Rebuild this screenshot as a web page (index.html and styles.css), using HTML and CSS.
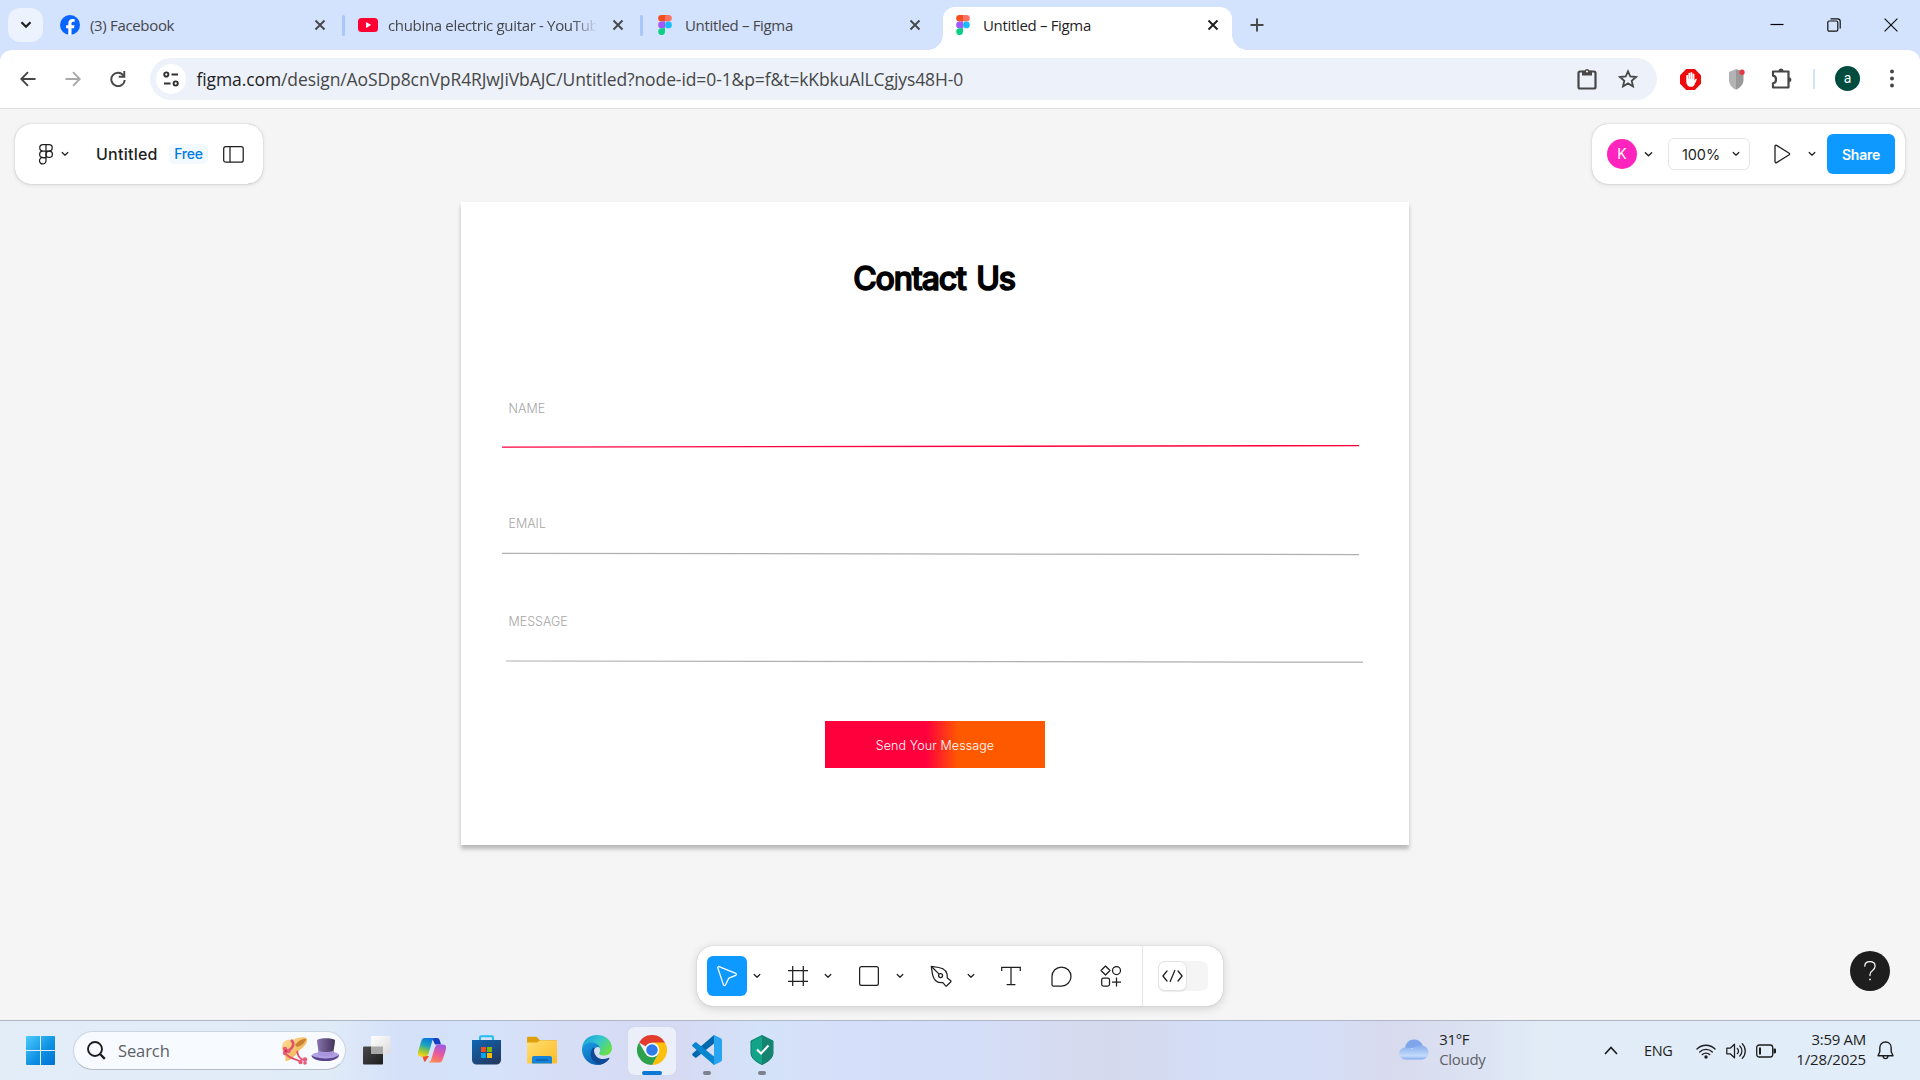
FILE: index.html
```html
<!DOCTYPE html>
<html lang="en">
<head>
<meta charset="utf-8">
<title>Untitled – Figma</title>
<link rel="stylesheet" href="styles.css">
</head>
<body>
<svg class="defs" width="0" height="0" aria-hidden="true">
  <symbol id="close" viewBox="0 0 12 12"><path d="M1.500 1.500l9 9M10.500 1.500l-9 9" fill="none" stroke="currentColor" stroke-width="1.900"/></symbol>
  <symbol id="chev" viewBox="0 0 8 6"><path d="M1.200 1.500l2.800 2.700 2.800-2.700" fill="none" stroke="currentColor" stroke-width="1.250" stroke-linecap="round" stroke-linejoin="round"/></symbol>
  <symbol id="figma" viewBox="0 0 14 20">
    <path d="M3.500 0H7v6.600H3.500a3.300 3.300 0 0 1 0-6.600z" fill="#f24e1e"/><path d="M7 0h3.500a3.300 3.300 0 0 1 0 6.600H7z" fill="#ff7262"/>
    <path d="M3.500 6.600H7v6.700H3.500a3.300 3.300 0 0 1 0-6.700z" fill="#a259ff"/><circle cx="10.400" cy="9.950" r="3.400" fill="#1abcfe"/>
    <path d="M3.500 13.300H7v3.300a3.400 3.400 0 1 1-3.500-3.300z" fill="#0acf83"/>
  </symbol>
</svg>

<header class="tabstrip">
  <button class="tab-search"><svg width="12" height="8" viewBox="0 0 12 8"><path d="M1.500 1.200L6 5.800l4.500-4.600" fill="none" stroke="#1f1f1f" stroke-width="2.200"/></svg></button>
  <div class="tabs">
    <div class="tab">
      <svg class="fav" viewBox="0 0 20 20"><circle cx="10" cy="10" r="10" fill="#0866ff"/><path d="M8.300 20v-6.800H6.100v-3h2.200V8.700c0-3.200 1.500-4.700 4.400-4.700.6 0 1.500.1 1.900.2v2.700c-.2 0-.6-.1-1.100-.1-1.500 0-2 .6-2 2v1.400h3l-.5 3h-2.500V20z" fill="#fff"/></svg>
      <span class="tab-title">(3) Facebook</span>
      <svg class="x"><use href="#close"/></svg>
    </div>
    <div class="tab">
      <svg class="fav" viewBox="0 0 20 20"><rect y="3" width="20" height="14" rx="3.500" fill="#ff0033"/><path d="M8 7l5.200 3L8 13z" fill="#fff"/></svg>
      <span class="tab-title long">chubina electric guitar - YouTube</span>
      <svg class="x"><use href="#close"/></svg>
    </div>
    <div class="tab">
      <svg class="fav"><use href="#figma"/></svg>
      <span class="tab-title">Untitled – Figma</span>
      <svg class="x"><use href="#close"/></svg>
    </div>
    <div class="tab active">
      <svg class="fav"><use href="#figma"/></svg>
      <span class="tab-title">Untitled – Figma</span>
      <svg class="x"><use href="#close"/></svg>
    </div>
  </div>
  <svg class="new-tab" width="14" height="14" viewBox="0 0 14 14"><path d="M7 .5v13M.5 7h13" stroke="#474747" stroke-width="1.900"/></svg>
  <div class="window-controls">
    <svg width="14" height="14" viewBox="0 0 14 14"><path d="M.5 6.500h13" stroke="#000" stroke-width="1.200"/></svg>
    <svg width="14" height="14" viewBox="0 0 14 14"><g fill="none" stroke="#111" stroke-width="1.200"><rect x=".8" y="3" width="10" height="10.200" rx="1.500"/><path d="M3.500 .8h7a2.700 2.700 0 0 1 2.700 2.700v7"/></g></svg>
    <svg width="14" height="14" viewBox="0 0 14 14"><path d="M.6.6l12.800 12.800M13.400.6L.6 13.400" stroke="#111" stroke-width="1.200"/></svg>
  </div>
</header>

<nav class="browser-bar">
  <div class="nav-buttons">
    <svg width="16" height="16" viewBox="0 0 16 16"><path d="M15.500 8H1.500M8 1.200L1.300 8 8 14.800" fill="none" stroke="#474747" stroke-width="1.900"/></svg>
    <svg width="16" height="16" viewBox="0 0 16 16"><path d="M.5 8h14M8 1.200L14.700 8 8 14.800" fill="none" stroke="#a9a9a9" stroke-width="1.900"/></svg>
    <svg width="16" height="16" viewBox="0 0 16 16"><path d="M13.600 4.700A6.700 6.700 0 1 0 14.700 9" fill="none" stroke="#474747" stroke-width="1.900"/><path d="M14.300 0v5.800H8.700" fill="none" stroke="#474747" stroke-width="1.900"/></svg>
  </div>
  <div class="omnibox">
    <span class="site-info"><svg width="16" height="16" viewBox="0 0 16 16"><g fill="none" stroke="#303030" stroke-width="1.900"><circle cx="3.300" cy="3.500" r="2.100"/><path d="M8.500 3.500H15M1 12.500h6.500"/><circle cx="12.700" cy="12.500" r="2.100"/></g></svg></span>
    <span class="url"><b>figma.com</b>/design/AoSDp8cnVpR4RJwJiVbAJC/Untitled?node-id=0-1&amp;p=f&amp;t=kKbkuAlLCgjys48H-0</span>
    <svg class="clip" width="20" height="22" viewBox="0 0 20 22"><rect x="1.500" y="3.500" width="17" height="17" rx="1.500" fill="none" stroke="#474747" stroke-width="2.200"/><path d="M5 2.800h2.600a2.500 2.500 0 0 1 4.800 0H15v4.700H5z" fill="#474747"/><circle cx="10" cy="3.400" r="1" fill="#fff"/></svg>
    <svg class="star" width="20" height="20" viewBox="0 0 20 20"><path d="M10 2.300l2.300 5.200 5.700.5-4.300 3.800 1.300 5.600-5-3-5 3 1.300-5.600L2 8l5.700-.5z" fill="none" stroke="#474747" stroke-width="1.800"/></svg>
  </div>
  <div class="extensions">
    <svg width="21" height="21" viewBox="0 0 21 21"><path d="M6.200 0h8.600L21 6.200v8.600L14.800 21H6.200L0 14.800V6.200z" fill="#ed0b0b"/><path d="M6.300 12V6.800a.9.900 0 0 1 1.800 0V10h.3V4.600a.9.900 0 0 1 1.800 0V10h.3V3.900a.9.900 0 0 1 1.800 0V10h.3V5.300a.9.900 0 0 1 1.800 0v6.500l.8-1.500c.7-.9 1.800-.3 1.500.5l-2.400 5.100c-.6 1.200-1.700 1.900-3.200 1.900-3 0-4.800-2-4.800-5.800z" fill="#fff"/></svg>
    <svg width="21" height="21" viewBox="0 0 21 21"><path d="M10 0L3 3v8c0 4.700 3.500 8 7 9.800z" fill="#b3b3b3"/><path d="M10 0l7.500 3v8c0 4.700-4 8-7.500 9.800z" fill="#999"/><circle cx="16" cy="3.200" r="2.700" fill="#e63946"/></svg>
    <svg width="22" height="22" viewBox="0 0 22 22"><path d="M2 3.500h15.500v16H2v-4.200c4-.5 4-7 0-7.600z" fill="none" stroke="#474747" stroke-width="2.200" stroke-linejoin="round"/><path d="M7.500 3a2.500 2.500 0 0 1 5 0M18 9.200a2.500 2.500 0 0 1 0 5z" fill="#474747"/></svg>
    <i class="ext-sep"></i>
    <span class="profile">a</span>
    <svg class="kebab" width="4" height="20" viewBox="0 0 4 20"><g fill="#474747"><circle cx="2" cy="2.500" r="2"/><circle cx="2" cy="9.500" r="2"/><circle cx="2" cy="16.500" r="2"/></g></svg>
  </div>
</nav>

<main class="workspace">
  <section class="panel file-panel">
    <svg class="fig-logo" width="14" height="21" viewBox="0 0 14 21"><g fill="none" stroke="#1f1f1f" stroke-width="1.250"><path d="M7 .7H3.900a3.150 3.150 0 0 0 0 6.300H7zM7 .7h3.100a3.150 3.150 0 0 1 0 6.300H7zM7 7H3.900a3.250 3.250 0 0 0 0 6.500H7z"/><circle cx="10.200" cy="10.250" r="3.200"/><path d="M7 13.500H3.900A3.250 3.250 0 1 0 7 16.800z"/></g></svg>
    <svg class="chev"><use href="#chev"/></svg>
    <span class="file-name">Untitled</span>
    <span class="plan">Free</span>
    <svg class="sidebar-icon" width="21" height="17" viewBox="0 0 21 17"><g fill="none" stroke="#1f1f1f" stroke-width="1.250"><rect x=".7" y=".7" width="19.500" height="15.500" rx="2"/><path d="M7 .7v15.500"/></g></svg>
  </section>

  <section class="panel share-panel">
    <span class="user">K</span>
    <svg class="chev big"><use href="#chev"/></svg>
    <span class="zoom">100%<svg class="chev"><use href="#chev"/></svg></span>
    <svg class="play" width="17" height="20" viewBox="0 0 17 20"><path d="M1 2.200v15.600c0 .8.900 1.300 1.600.8l12.600-7.800c.6-.4.600-1.200 0-1.600L2.600 1.400C1.900.9 1 1.400 1 2.200z" fill="none" stroke="#1f1f1f" stroke-width="1.300"/></svg>
    <svg class="chev play-chev"><use href="#chev"/></svg>
    <button class="share">Share</button>
  </section>

  <article class="frame">
    <h1>Contact Us</h1>
    <div class="field name"><label>NAME</label><svg class="rule" viewBox="0 0 857 6"><path d="M0 4.200L857 2.600" stroke="#ff003d" stroke-width="1.300"/></svg></div>
    <div class="field email"><label>EMAIL</label><svg class="rule" viewBox="0 0 857 6"><path d="M0 2.300L857 3.600" stroke="#b0b0b0" stroke-width="1.200"/></svg></div>
    <div class="field message"><label>MESSAGE</label><svg class="rule" viewBox="0 0 857 6"><path d="M0 2L857 3.200" stroke="#b0b0b0" stroke-width="1.200"/></svg></div>
    <button class="send">Send Your Message</button>
  </article>

  <section class="panel tools">
    <span class="tool selected"><svg width="24" height="24" viewBox="0 0 24 24"><path d="M2.800 3.900l5.700 17c.3.900 1.500.9 1.900.1l3.100-6.300c.2-.4.5-.7.900-.9l6.300-2.500c.9-.4.9-1.600 0-1.900L4.100 2.600c-.8-.3-1.600.5-1.300 1.300z" fill="none" stroke="#fff" stroke-width="1.300"/></svg></span>
    <svg class="chev"><use href="#chev"/></svg>
    <span class="tool"><svg width="20" height="20" viewBox="0 0 20 20"><path d="M4.700 0v20M15.300 0v20M0 4.700h20M0 15.300h20" stroke="#1f1f1f" stroke-width="1.250"/></svg></span>
    <svg class="chev"><use href="#chev"/></svg>
    <span class="tool"><svg width="20" height="20" viewBox="0 0 20 20"><rect x=".6" y=".6" width="18.800" height="18.800" rx="2" fill="none" stroke="#1f1f1f" stroke-width="1.250"/></svg></span>
    <svg class="chev shape-chev"><use href="#chev"/></svg>
    <span class="tool"><svg width="22" height="22" viewBox="0 0 22 22"><g fill="none" stroke="#1f1f1f" stroke-width="1.250" stroke-linejoin="round"><path d="M1.300 1.300l7.500 1.200c6.500 1.100 8.900 5.200 8.500 10.500l3.200 2.500c.6.500.6 1 .1 1.500l-3.800 3.700c-.5.500-1 .4-1.400-.1l-2.500-2.900c-5.500.4-9.200-2.200-10.400-8.400z"/><path d="M1.500 1.500l7.600 7.600"/><circle cx="10.600" cy="10.600" r="2"/></g></svg></span>
    <svg class="chev pen-chev"><use href="#chev"/></svg>
    <span class="tool text-tool"><svg width="20" height="20" viewBox="0 0 20 20"><path d="M.7 5V1.300h18.600V5M10 1.300v17.400M5.600 18.700h8.800" fill="none" stroke="#1f1f1f" stroke-width="1.250"/></svg></span>
    <span class="tool"><svg width="21" height="21" viewBox="0 0 21 21"><path d="M10.500 1a9.500 9.500 0 1 1 0 19H2.200c-.7 0-1.200-.5-1.200-1.200v-8.300A9.500 9.500 0 0 1 10.500 1z" fill="none" stroke="#1f1f1f" stroke-width="1.250"/></svg></span>
    <span class="tool"><svg width="22" height="22" viewBox="0 0 22 22"><g fill="none" stroke="#1f1f1f" stroke-width="1.250" stroke-linejoin="round"><path d="M5.500 1L10 5.500 5.500 10 1 5.500z"/><circle cx="16.500" cy="5.500" r="4"/><rect x="1.700" y="13" width="7.800" height="8" rx="1.800"/><path d="M16.500 12.500v9M12 17h9"/></g></svg></span>
    <span class="mode"><span class="toggle"><span class="knob"><svg width="21" height="14" viewBox="0 0 21 14"><path d="M5 2L.9 7 5 12M16 2l4.100 5L16 12M12.800 1.500L8.200 12.500" fill="none" stroke="#1f1f1f" stroke-width="1.250" stroke-linecap="round" stroke-linejoin="round"/></svg></span></span></span>
  </section>

  <button class="help"><svg width="14" height="22" viewBox="0 0 14 22"><path d="M1.800 6.200C1.800 3.400 4 1.700 6.900 1.700s5.200 1.700 5.200 4.500c0 2.300-1.300 3.400-2.800 4.500C7.900 11.700 7 12.500 7 14.600v1" fill="none" stroke="#fff" stroke-width="1.200" stroke-linecap="round"/><circle cx="7" cy="19.400" r=".9" fill="#fff"/></svg></button>
</main>

<footer class="taskbar">
  <svg class="start" width="29" height="29" viewBox="0 0 29 29"><defs><linearGradient id="win" gradientUnits="userSpaceOnUse" x1="0" y1="0" x2="29" y2="29"><stop offset="0" stop-color="#4ccbfb"/><stop offset=".55" stop-color="#0f92e4"/><stop offset="1" stop-color="#0070d0"/></linearGradient></defs><path d="M1 0h13v14H0V1a1 1 0 0 1 1-1zM15 0h13a1 1 0 0 1 1 1v13H15zM0 15h14v14H1a1 1 0 0 1-1-1zM15 15h14v13a1 1 0 0 1-1 1H15z" fill="url(#win)"/></svg>
  <div class="search">
    <svg width="19" height="19" viewBox="0 0 19 19"><circle cx="8" cy="8" r="7" fill="none" stroke="#1d1d1d" stroke-width="1.900"/><path d="M13 13l4.800 4.800" stroke="#1d1d1d" stroke-width="2.400"/></svg>
    <span>Search</span>
    <svg class="hats" width="60" height="28" viewBox="0 0 60 28">
      <defs><linearGradient id="straw" x1="0" y1="0" x2="1" y2="1"><stop offset="0" stop-color="#ffe09a"/><stop offset="1" stop-color="#eca63f"/></linearGradient><linearGradient id="felt" x1="0" y1="0" x2="1" y2="0"><stop offset="0" stop-color="#8874ae"/><stop offset="1" stop-color="#423359"/></linearGradient></defs>
      <path d="M1 12C0 5 6 1 11 3c5-3 14-4 15-1 1 5-5 9-9 13-4 5-8 9-13 9 2-4-2-8-3-12z" fill="url(#straw)"/>
      <path d="M14 8c4-5 9-7 11-6-1 4-5 7-9 8z" fill="#c98232"/>
      <path d="M10 3c4 3 3 8-5 12" fill="none" stroke="#e0506d" stroke-width="2.500"/>
      <path d="M5 17c5 6 10 4 15 8M16 14c1 5 2 7 6 9" fill="none" stroke="#e0506d" stroke-width="1.800"/>
      <g fill="#e8597a"><circle cx="4" cy="12" r="2.200"/><circle cx="7.500" cy="14" r="2.200"/><circle cx="4" cy="16" r="2.200"/><circle cx="19.500" cy="25" r="2.200"/><circle cx="24" cy="22.500" r="2.200"/><circle cx="24" cy="26" r="1.800"/></g><circle cx="5" cy="14" r="1.200" fill="#c9304f"/>
      <path d="M30.500 18.500c2-3 7-3.500 14-3.500s11 0 13.500 2.500c1 4-6 6.500-13.500 6.500s-14-2-14-5.500z" fill="#b2a1e2"/>
      <path d="M30.500 18.500c5 3 21 5 27.500-.5-1 4-7 6-13.500 6s-13-1.500-14-5.500z" fill="#58438a"/>
      <path d="M37.500 16c0-5-1.500-9-1.500-13 3-2.200 15-2.200 18 0 0 4-1.500 9-1.500 13-3 2-12 2-15 0z" fill="url(#felt)"/>
      <path d="M37.300 13.500c4 2 11 2 15.300 0V18c-4 2-11 2-15.300 0z" fill="#a996dc"/>
    </svg>
  </div>
  <div class="apps">
    <span class="app"><svg width="29" height="29" viewBox="0 0 29 29"><defs><linearGradient id="tv1" x1="0" y1="0" x2="1" y2="1"><stop offset="0" stop-color="#4b4b4b"/><stop offset="1" stop-color="#1d1d1d"/></linearGradient><linearGradient id="tv2" x1="0" y1="0" x2="1" y2="1"><stop offset="0" stop-color="#fff"/><stop offset="1" stop-color="#dcdcdc"/></linearGradient></defs><rect x="1" y="10.500" width="20" height="18" rx="1" fill="url(#tv1)"/><rect x="9" y="0" width="19.500" height="18" rx="1" fill="url(#tv2)"/><path d="M9 10.500h12V18H9z" fill="#a9a9a9"/></svg></span>
    <span class="app"><svg width="30" height="28" viewBox="0 0 30 28"><defs><linearGradient id="cp1" x1=".6" y1="0" x2=".3" y2="1"><stop offset="0" stop-color="#0d72dc"/><stop offset=".4" stop-color="#1ba5c0"/><stop offset=".7" stop-color="#8dc63f"/><stop offset="1" stop-color="#ffd314"/></linearGradient><linearGradient id="cp2" x1=".7" y1="0" x2=".3" y2="1"><stop offset="0" stop-color="#9c59e6"/><stop offset=".5" stop-color="#e85a9b"/><stop offset="1" stop-color="#ff8a4e"/></linearGradient></defs><path d="M15 2h5c1.500 0 2.500 1 3 3l1 3.500h-6z" fill="#173fc0"/><path d="M8 26c-1-.500-1.500-2-2-4l-.5-2H12z" fill="#ef5130"/><path d="M7.500 2H18c-2 .500-2.500 2-3.300 5l-2.900 10c-.8 2.500-2 3.500-4.500 3.500H4C.500 20.500.5 17.500 1.500 14L4 6c.8-2.700 1.500-4 3.500-4z" fill="url(#cp1)"/><path d="M22.500 26.500H11c2.500-.300 3-2 3.800-5l2.900-9.500c.8-2.500 2-3.500 4.500-3.500H26c3.500 0 3.500 3 2.500 6.500L26 22.500c-.8 2.700-1.500 4-3.500 4z" fill="url(#cp2)"/></svg></span>
    <span class="app"><svg width="29" height="30" viewBox="0 0 29 30"><defs><linearGradient id="st" x1="0" y1="0" x2=".7" y2="1"><stop offset="0" stop-color="#0f66b5"/><stop offset="1" stop-color="#233a62"/></linearGradient></defs><path d="M8 6V2.500C8 1.700 8.500 1.200 9.200 1.200h10.600c.7 0 1.200.5 1.200 1.300V6" fill="none" stroke="#22bdf2" stroke-width="2"/><path d="M0 5h29v20a4.500 4.500 0 0 1-4.500 4.500h-20A4.500 4.500 0 0 1 0 25z" fill="url(#st)"/><path d="M9 12h5v5H9z" fill="#f25022"/><path d="M15 12h5v5h-5z" fill="#7fba00"/><path d="M9 18h5v5H9z" fill="#00a4ef"/><path d="M15 18h5v5h-5z" fill="#ffb900"/></svg></span>
    <span class="app"><svg width="30" height="28" viewBox="0 0 30 28"><defs><linearGradient id="fo" x1="0" y1="0" x2="1" y2="1"><stop offset="0" stop-color="#ffdf72"/><stop offset="1" stop-color="#fdbb25"/></linearGradient></defs><path d="M0 2c0-.7.500-1.200 1.200-1.200h8.300L13 4.200h15.800c.700 0 1.200.500 1.200 1.200V10H0z" fill="#dfa00f"/><path d="M0 6.500h10l3-2h17v22.300c0 .5-.5.700-1 .7H1c-.500 0-1-.2-1-.700z" fill="url(#fo)"/><path d="M5 27.500V22a2 2 0 0 1 2-2h16a2 2 0 0 1 2 2v5.500z" fill="#1483d8"/><path d="M9 24h12" stroke="#0b5a9d" stroke-width="1.300"/></svg></span>
    <span class="app"><svg width="30" height="30" viewBox="0 0 30 30"><defs><linearGradient id="e1" x1="0" y1="0" x2="1" y2=".6"><stop offset="0" stop-color="#1597dc"/><stop offset=".5" stop-color="#32c5d4"/><stop offset="1" stop-color="#68df4c"/></linearGradient><linearGradient id="e2" x1="0" y1="0" x2=".5" y2="1"><stop offset="0" stop-color="#1b9de2"/><stop offset="1" stop-color="#0c61b7"/></linearGradient></defs><path d="M0 13C1 5 7 0 15 0c9 0 15 6 15 13 0 5-4 7.500-8 7.500-3.500 0-5.500-1.200-4.700-2.500 3-5-3-10-9-9-4 .5-7 2-8.300 4z" fill="url(#e1)"/><path d="M0 13.500C1 10 5 7.500 9 7.500c5 0 8.500 2.500 9 5.500-1-1.500-5-1.500-6 2.500-1 6 5 13 13 9.500C22 28.500 19 30 15 30 6 30-.5 22 0 13.500z" fill="url(#e2)"/><path d="M11 12.500C6 19 9 27.500 18 29.700c4-.7 7.500-3 9.300-6 .3-.8-.300-1-1-.7-7 3-14.300-.500-14.300-8 0-.8 0-1.500.3-2z" fill="#104a97"/></svg></span>
    <span class="app current"><svg width="30" height="30" viewBox="0 0 30 30"><path d="M15 15L2 7.500A15 15 0 0 1 28 7.500z" fill="#e33b2e"/><path d="M15 7.500h13A15 15 0 0 1 15 30l6.500-11.300z" fill="#fdc10d"/><path d="M2 7.500A15 15 0 0 0 15 30l6.500-11.300H8.500z" fill="#2da14c"/><circle cx="15" cy="15" r="7.300" fill="#fff"/><circle cx="15" cy="15" r="5.800" fill="#2f7bea"/></svg></span>
    <span class="app running"><svg width="30" height="30" viewBox="0 0 30 30"><path d="M22 0v8.500L4.500 22.500c-.5.400-1 .4-1.500 0L.6 20.400c-.6-.6-.6-1.300 0-1.800z" fill="#0068b0"/><path d="M22 30v-8.500L4.500 7.500c-.500-.4-1-.4-1.500 0L.6 9.600c-.6.600-.6 1.300 0 1.800z" fill="#0a86d1"/><path d="M21 .2c.5-.3 1-.2 1.600 0l5.700 2.700c1 .5 1.700 1.300 1.700 2.300v19.600c0 1-.7 1.800-1.700 2.300l-5.700 2.700c-.600.3-1.100.3-1.600 0 .5-.300 1-.5 1-1.500V1.700c0-.700-.5-1.200-1-1.500z" fill="#27a5f2"/></svg></span>
    <span class="app running"><svg width="24" height="30" viewBox="0 0 24 30"><path d="M12 .5L23 6v12c0 5-5 9-11 11.500C6 27 1 23 1 18V6z" fill="#12a489" stroke="#0b7a66"/><path d="M12 1l10.500 5.300V18c0 4.500-4.500 8.300-10.500 11z" fill="#14836f"/><path d="M7 14.500l4 4 7.500-8" fill="none" stroke="#fff" stroke-width="2"/></svg></span>
  </div>
  <div class="weather">
    <svg width="30" height="21" viewBox="0 0 30 21"><defs><linearGradient id="cl" x1="0" y1="0" x2="0" y2="1"><stop offset="0" stop-color="#86adf0"/><stop offset=".75" stop-color="#c4dcfb"/><stop offset="1" stop-color="#80aaf0"/></linearGradient></defs><path d="M6 9.500C6.500 3.500 10.500.5 15 .5s8 2.500 9 7.500z" fill="#7fa6ea"/><path d="M6.300 20.500a6 6 0 1 1 1-11.900c2-.3 4.200.2 6 1.400 2-2.200 5-3.500 8.500-3.500a7 7 0 0 1 1.500 14z" fill="url(#cl)"/></svg>
    <div class="stack"><span>31°F</span><span class="muted">Cloudy</span></div>
  </div>
  <div class="tray">
    <svg class="up" width="14" height="9" viewBox="0 0 14 9"><path d="M1 8l6-6.500L13 8" fill="none" stroke="#1d1d1d" stroke-width="1.700"/></svg>
    <span class="lang">ENG</span>
    <svg class="wifi" width="20" height="16" viewBox="0 0 20 16"><g fill="none" stroke="#1d1d1d" stroke-width="1.400" stroke-linecap="round"><path d="M1 6a12.700 12.700 0 0 1 18 0M3.700 8.900a9 9 0 0 1 12.600 0M6.300 11.600a5.300 5.300 0 0 1 7.400 0"/></g><circle cx="10" cy="14" r="1.700" fill="#1d1d1d"/></svg>
    <svg class="sound" width="20" height="18" viewBox="0 0 20 18"><g fill="none" stroke="#1d1d1d" stroke-width="1.250" stroke-linecap="round" stroke-linejoin="round"><path d="M.8 6.200v5.600h3.400l4.300 4V2.200l-4.300 4z"/><path d="M11.300 6.300a4 4 0 0 1 0 5.400M13.800 4a7 7 0 0 1 0 10M16.200 1.600a10.500 10.500 0 0 1 0 14.800"/></g></svg>
    <svg class="battery" width="20" height="14" viewBox="0 0 20 14"><rect x=".7" y="1" width="16" height="12" rx="2.500" fill="none" stroke="#1d1d1d" stroke-width="1.300"/><path d="M3 3.500h2v7H3zM17.500 4.500h1.200c.8 0 1.300.5 1.300 1.200v2.600c0 .7-.5 1.200-1.300 1.200h-1.200z" fill="#1d1d1d"/></svg>
    <div class="stack clock"><span class="time">3:59 AM</span><span class="date">1/28/2025</span></div>
    <svg class="bell" width="17" height="19" viewBox="0 0 17 19"><path d="M8.500 1C5 1 2.800 3.600 2.800 6.800v4L1 14.700h15l-1.800-3.900v-4C14.200 3.600 12 1 8.500 1zM6 15c.2 1.700 1.200 2.600 2.500 2.600S10.800 16.700 11 15" fill="none" stroke="#1d1d1d" stroke-width="1.400" stroke-linejoin="round"/></svg>
  </div>
</footer>
</body>
</html>
```
FILE: styles.css
```css
* { box-sizing: border-box; }
body { margin: 0; width: 1920px; height: 1080px; overflow: hidden; display: flex; flex-direction: column; background: linear-gradient(#d3e2fd 0 80px, #f5f5f5 80px); color: #1f1f1f; font-family: "Open Sans", "Noto Sans", sans-serif; }
button { border: 0; padding: 0; font: inherit; }
svg { display: block; flex: none; }
.defs { position: absolute; }

.tabstrip { height: 50px; flex: none; display: flex; align-items: center; padding-left: 8px; }
.tab-search { width: 35px; height: 34px; border-radius: 12px; background: #ecf2fe; display: grid; place-items: center; }
.tabs { display: flex; gap: 9px; margin-left: 6px; align-self: stretch; padding-top: 7px; }
.tab { position: relative; width: 289px; height: 43px; padding: 0 12px 7px 11px; display: flex; align-items: center; color: #45474b; }
.tab:nth-child(n+3) { padding: 0 13px 7px 10px; }
.tab:not(.active):not(:nth-child(3))::after { content: ""; position: absolute; right: -7px; top: 8px; width: 3px; height: 21px; border-radius: 2px; background: #a8c7fa; }
.fav { width: 20px; height: 20px; }
.tab-title { margin-left: 10px; flex: 1; min-width: 0; font-size: 15px; letter-spacing: -.33px; line-height: 20px; white-space: nowrap; overflow: hidden; }
.tab-title.long { -webkit-mask-image: linear-gradient(90deg, #000 185px, transparent 209px); mask-image: linear-gradient(90deg, #000 185px, transparent 209px); }
.x { width: 12px; height: 12px; }
.tab.active { background: #fff; border-radius: 12px 12px 0 0; color: #1f1f1f; }
.tab.active::before, .tab.active::after { content: ""; position: absolute; bottom: 0; width: 15px; height: 15px; }
.tab.active::before { left: -15px; background: radial-gradient(circle at 0 0, transparent 14.500px, #fff 15px); }
.tab.active::after { right: -15px; background: radial-gradient(circle at 100% 0, transparent 14.500px, #fff 15px); }
.new-tab { margin-left: 18px; }
.window-controls { margin-left: auto; display: flex; gap: 43px; padding-right: 22px; }

.browser-bar { height: 59px; flex: none; display: flex; align-items: center; background: #fff; border-bottom: 1px solid #dfdfdf; padding: 0 26px 0 20px; border-radius: 12px 12px 0 0; }
.nav-buttons { display: flex; gap: 29px; width: 130px; }
.omnibox { width: 1507px; height: 42px; border-radius: 21px; background: #ecf1fa; display: flex; align-items: center; padding: 0 19px 0 6px; }
.site-info { width: 30px; height: 30px; border-radius: 15px; background: #fff; display: grid; place-items: center; }
.url { margin-left: 10.500px; font-size: 17.500px; letter-spacing: -.1px; color: #474747; white-space: nowrap; line-height: 24px; }
.url b { font-weight: 400; color: #1f1f1f; }
.clip { margin-left: auto; }
.star { margin-left: 21px; }
.extensions { flex: 1; display: flex; align-items: center; padding-left: 23px; }
.extensions svg + svg { margin-left: 24.500px; }
.ext-sep { width: 2px; height: 20px; background: #d3e3fd; margin-left: 20px; }
.profile { width: 25px; height: 25px; border-radius: 50%; background: #004d40; color: #fff; font: 400 14px/24px Roboto, sans-serif; text-align: center; margin: -1px 0 0 20px; }
.kebab { margin-left: auto; }

.workspace { flex: 1; position: relative; background: #f5f5f5; font-family: Inter, "Liberation Sans", sans-serif; }
.panel { position: absolute; background: #fff; border-radius: 16px; height: 60px; display: flex; align-items: center; box-shadow: 0 0 1px rgba(0,0,0,.3), 0 1px 4px rgba(0,0,0,.12); }
.chev { width: 8px; height: 6px; }
.file-panel { left: 15px; top: 15px; width: 248px; padding-left: 24px; }
.file-panel .chev { margin-left: 8px; }
.file-name { margin: -1px 0 0 27px; width: 73px; font-size: 16px; font-weight: 500; letter-spacing: .25px; }
.plan { width: 39px; height: 20px; border-radius: 5px; background: #f2f9ff; color: #007be5; font-size: 14px; font-weight: 500; line-height: 20px; text-align: center; letter-spacing: -.2px; }
.sidebar-icon { margin-left: 15px; }
.share-panel { right: 15px; top: 15px; width: 313px; padding: 0 10px 0 15px; }
.user { width: 30px; height: 30px; border-radius: 50%; background: #ff24bd; color: #fff; font-size: 14px; line-height: 30px; text-align: center; }
.chev.big { width: 9px; height: 7px; margin-left: 7px; }
.zoom { width: 82px; height: 32px; border: 1px solid #e6e6e6; border-radius: 6px; margin-left: 15px; padding: 0 9px 0 13px; display: flex; align-items: center; justify-content: space-between; font-size: 14.500px; letter-spacing: -.1px; }
.play { margin-left: 24px; }
.play-chev { margin-left: 17px; }
.share { width: 68px; height: 40px; border-radius: 6px; background: #0d99ff; color: #fff; margin-left: auto; font-size: 14px; font-weight: 600; letter-spacing: -.2px; }

.frame { position: absolute; left: 461px; top: 93px; width: 948px; height: 643px; background: #fff; box-shadow: 0 4px 4px rgba(0,0,0,.25); padding-top: 57px; display: flex; flex-direction: column; }
h1 { margin: 0 0 -1px; font-size: 32px; line-height: 40px; font-weight: 500; letter-spacing: -1.150px; word-spacing: 3px; -webkit-text-stroke: 1.500px #000; text-align: center; color: #000; padding-right: 2px; }
.field { padding-left: 41px; display: flex; flex-direction: column; }
.field label { padding: 1px 0 0 6.500px; font-size: 12.500px; line-height: 16px; font-weight: 300; color: #a6a6a6; }
.rule { width: 857px; height: 6px; }
.name { margin-top: 102px; gap: 26px; }
.email { margin-top: 66px; gap: 19px; }
.message { margin-top: 56px; gap: 29px; }
.message .rule { margin-left: 4px; }
.send { margin: 56px 0 0 364px; width: 220px; height: 47px; padding-top: 1px; background: linear-gradient(90deg, #ff003d 46%, #ff5900 60.500%); color: #fff; font-size: 12.500px; font-weight: 300; letter-spacing: .1px; }

.tools { left: 697px; top: 837px; width: 526px; padding-left: 10px; box-shadow: 0 0 1px rgba(0,0,0,.3), 0 2px 10px rgba(0,0,0,.16); }
.tool { width: 40px; height: 40px; border-radius: 6px; display: grid; place-items: center; }
.selected { background: #0d99ff; }
.tools .chev { margin: 0 17px 0 6px; }
.tools .shape-chev { margin-left: 7px; }
.tools .pen-chev { margin-right: 16px; }
.tools .text-tool ~ .tool { margin-left: 10px; }
.mode { margin-left: 11px; height: 60px; border-left: 1px solid #e6e6e6; padding-left: 15px; display: flex; align-items: center; }
.toggle { width: 50px; height: 30px; background: #f5f5f5; border-radius: 7px; }
.knob { width: 29px; height: 30px; border: 1px solid #e3e3e3; border-radius: 7px; background: #fff; display: grid; place-items: center; box-shadow: 0 1px 1px rgba(0,0,0,.08); }
.help { position: absolute; right: 30px; top: 842px; width: 40px; height: 40px; border-radius: 50%; background: #1e1e1e; display: grid; place-items: center; }

.taskbar { height: 60px; flex: none; display: flex; align-items: center; border-top: 1px solid #adb6c4; background: linear-gradient(90deg, #e3edf8 0, #e0ebf8 330px, #d4e1f9 400px, #d5e3fa 480px, #d6def6 560px, #d6daf3 680px, #d4e3f9 760px, #d6dff9 840px, #d5def8 980px, #d5d9ec 1110px, #d3def7 1220px, #d5def5 1330px, #d8daee 1390px, #dbe2f2 1470px, #e1ecf7 1540px, #e1edf9 1920px); padding-left: 26px; font-size: 15px; }
.search { width: 273px; height: 39px; margin-left: 18px; border-radius: 20px; border: 1px solid #ccd5e0; border-bottom-color: #b4bdca; background: #f7fafe; display: flex; align-items: center; padding: 0 4px 0 13px; color: #5c6067; font-size: 16.500px; letter-spacing: -.1px; }
.search span { margin-left: 12px; }
.hats { margin-left: auto; }
.apps { display: flex; margin-left: 6.500px; gap: 7.100px; }
.app { position: relative; width: 48px; height: 48px; border-radius: 6px; display: grid; place-items: center; }
.app svg { margin-top: -1px; }
.current { background: #ebeff9; box-shadow: 0 0 1px #b9c0d4; }
.running::after, .current::after { content: ""; position: absolute; bottom: 0; left: 20px; width: 8px; height: 4px; border-radius: 2px; background: #7c828d; }
.current::after { left: 14px; width: 20px; background: #0b78d4; }
.weather { margin-left: 613px; display: flex; align-items: center; gap: 10px; }
.weather svg { margin-top: -3px; }
.stack { display: flex; flex-direction: column; line-height: 20px; letter-spacing: -.3px; margin-top: -4px; }
.muted { color: #5d6168; }
.tray { margin-left: auto; display: flex; align-items: center; padding-right: 26px; }
.up, .bell { margin-top: -1px; }
.lang { margin-left: 26px; width: 52px; font-size: 14.500px; letter-spacing: -.3px; }
.sound, .battery { margin-left: 10px; }
.clock { margin-left: 20px; width: 70px; align-items: flex-end; }
.date { letter-spacing: -.150px; }
.bell { margin-left: 11px; }
```
